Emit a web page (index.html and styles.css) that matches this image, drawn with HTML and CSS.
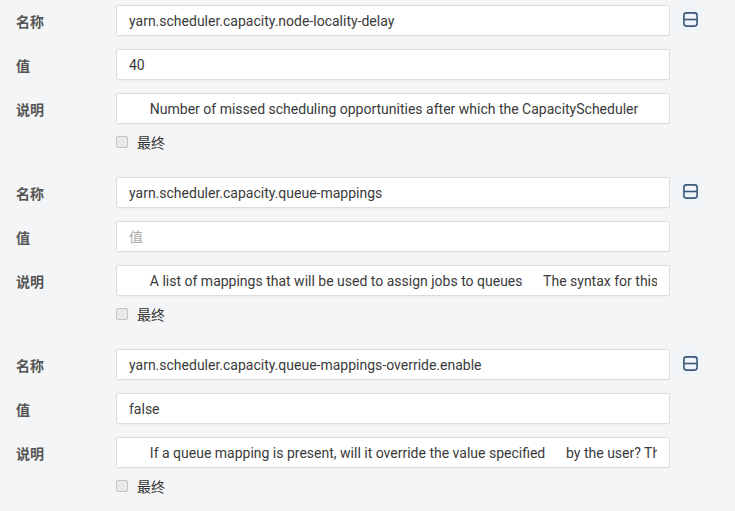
FILE: index.html
```html
<!DOCTYPE html>
<html lang="zh">

<head>
  <meta charset="UTF-8">
  <meta name="viewport" content="width=device-width, initial-scale=1.0">
  <title>属性</title>
  <link rel="stylesheet" href="styles.css">
</head>

<body>
  <div class="props">

    <div class="prop">
      <div class="row">
        <label class="lbl">名称</label>
        <input class="field" type="text" value="yarn.scheduler.capacity.node-locality-delay">
        <button class="remove" title="删除">
          <svg width="15" height="15" viewBox="0 0 15 15"><rect x="0.9" y="0.9" width="13.2" height="13.2" rx="2.5" fill="none" stroke="#3b5878" stroke-width="1.6"/><line x1="1" y1="7.5" x2="14" y2="7.5" stroke="#3b5878" stroke-width="1.6"/></svg>
        </button>
      </div>
      <div class="row">
        <label class="lbl">值</label>
        <input class="field" type="text" placeholder="值" value="40">
      </div>
      <div class="row">
        <label class="lbl">说明</label>
        <input class="field" type="text" value="      Number of missed scheduling opportunities after which the CapacityScheduler      attempts to schedule rack-local containers.">
      </div>
      <div class="final">
        <label class="check"><input type="checkbox"> 最终</label>
      </div>
    </div>

    <div class="prop">
      <div class="row">
        <label class="lbl">名称</label>
        <input class="field" type="text" value="yarn.scheduler.capacity.queue-mappings">
        <button class="remove" title="删除">
          <svg width="15" height="15" viewBox="0 0 15 15"><rect x="0.9" y="0.9" width="13.2" height="13.2" rx="2.5" fill="none" stroke="#3b5878" stroke-width="1.6"/><line x1="1" y1="7.5" x2="14" y2="7.5" stroke="#3b5878" stroke-width="1.6"/></svg>
        </button>
      </div>
      <div class="row">
        <label class="lbl">值</label>
        <input class="field" type="text" placeholder="值" value="">
      </div>
      <div class="row">
        <label class="lbl">说明</label>
        <input class="field" type="text" value="      A list of mappings that will be used to assign jobs to queues      The syntax for this list is [u|g]:[name]:[queue_name][,next mapping]*">
      </div>
      <div class="final">
        <label class="check"><input type="checkbox"> 最终</label>
      </div>
    </div>

    <div class="prop">
      <div class="row">
        <label class="lbl">名称</label>
        <input class="field" type="text" value="yarn.scheduler.capacity.queue-mappings-override.enable">
        <button class="remove" title="删除">
          <svg width="15" height="15" viewBox="0 0 15 15"><rect x="0.9" y="0.9" width="13.2" height="13.2" rx="2.5" fill="none" stroke="#3b5878" stroke-width="1.6"/><line x1="1" y1="7.5" x2="14" y2="7.5" stroke="#3b5878" stroke-width="1.6"/></svg>
        </button>
      </div>
      <div class="row">
        <label class="lbl">值</label>
        <input class="field" type="text" placeholder="值" value="false">
      </div>
      <div class="row">
        <label class="lbl">说明</label>
        <input class="field" type="text" value="      If a queue mapping is present, will it override the value specified      by the user? This can be used by administrators to place jobs in queues">
      </div>
      <div class="final">
        <label class="check"><input type="checkbox"> 最终</label>
      </div>
    </div>

  </div>
</body>

</html>
```

FILE: styles.css
```css
html,body {
  box-sizing: border-box;
  margin: 0;
  width: 100%;
}

*,
*:before,
*:after {
  box-sizing: inherit;
}

body {
  background-color: #f4f5f6;
  font-family: Roboto, "Noto Sans CJK SC", sans-serif;
  font-size: 14px;
  color: #333;
}

.prop {
  padding: 5px 0 24px 0;
}

.row {
  display: flex;
  align-items: center;
  height: 31px;
  margin-bottom: 13px;
}

.lbl {
  width: 116px;
  padding-left: 16px;
  font-weight: bold;
  color: #555;
}

.field {
  width: 554px;
  height: 31px;
  padding: 0 12px;
  border: 1px solid #dcdcdc;
  border-radius: 2px;
  background-color: #fff;
  font-family: Roboto, "Noto Sans CJK SC", sans-serif;
  font-size: 14px;
  color: #3a3a3a;
  box-shadow: 0 1px 1px rgba(0, 0, 0, .03);
}
.field::placeholder {
  color: #aaa;
}

.remove {
  display: flex;
  align-items: center;
  justify-content: center;
  width: 24px;
  height: 24px;
  margin-left: 8px;
  margin-top: -3px;
  padding: 0;
  border: none;
  border-radius: 2px;
  background-color: #eef4f8;
}

.final {
  height: 12px;
  margin-top: -1px;
  padding-left: 116px;
}

.check {
  display: flex;
  align-items: center;
  gap: 9px;
  height: 12px;
  color: #333;
}

.check input {
  appearance: none;
  width: 12px;
  height: 12px;
  margin: 0;
  border: 1px solid #c4c4c4;
  border-radius: 2px;
  background-color: #e9e9e9;
}
```
